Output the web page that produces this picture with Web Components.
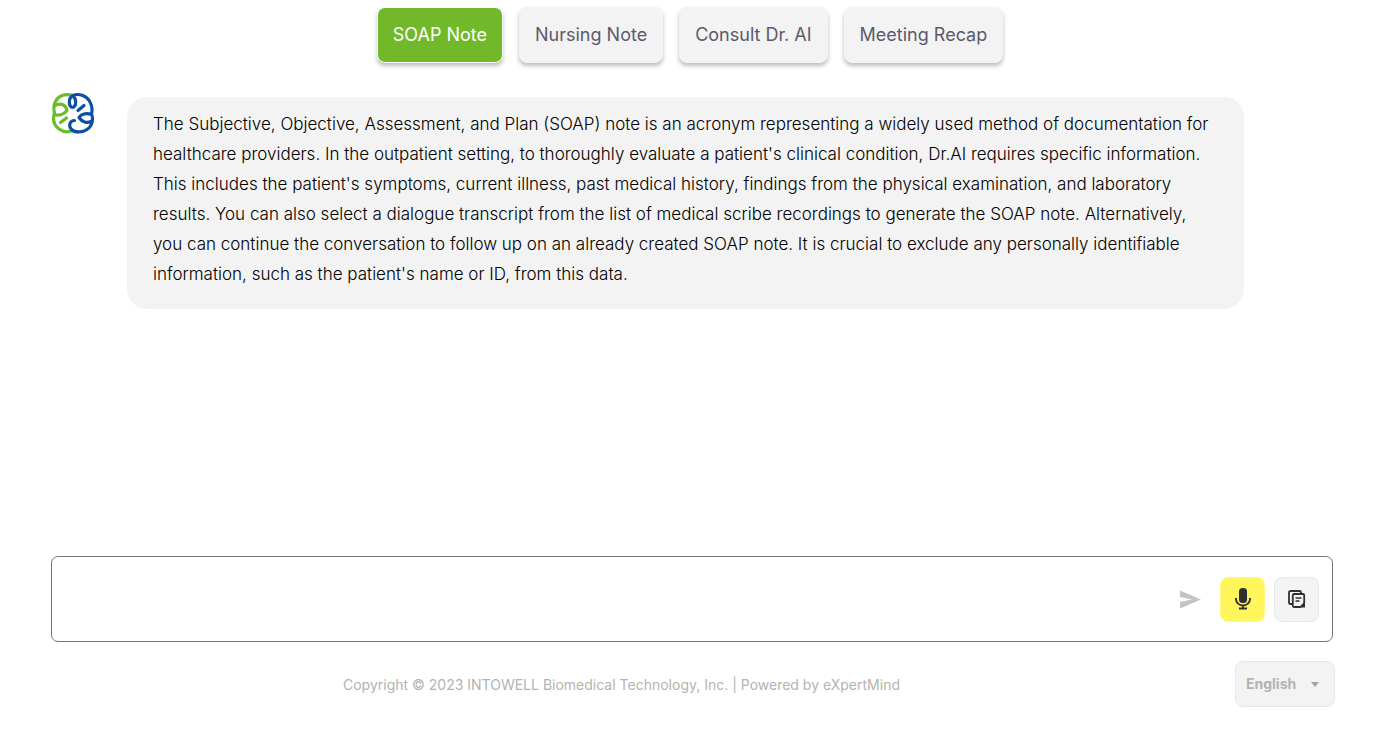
<!DOCTYPE html>
<html lang="en">
<head>
<meta charset="utf-8">
<meta name="viewport" content="width=device-width, initial-scale=1">
<title>Dr. AI</title>
<style>
body { margin: 0; background: #fff; font-family: Inter, sans-serif; }
</style>
</head>
<body>
<doctor-app></doctor-app>
<script>
const define = (name, html, setup) => {
  const template = document.createElement('template');
  template.innerHTML = html;
  customElements.define(name, class extends HTMLElement {
    constructor() {
      super();
      this.attachShadow({ mode: 'open' }).append(template.content.cloneNode(true));
    }
    connectedCallback() { if (setup) setup(this, this.shadowRoot); }
  });
};

define('mode-tab', `
<style>
:host { display: block; }
button { box-sizing: border-box; height: 56px; padding: 0 15px; border: 1px solid #f4f4f4; border-radius: 8px; background: #f3f3f3; color: #5d596c; font: 400 18px/24px Inter, sans-serif; white-space: nowrap; box-shadow: 0 3px 4px rgba(0,0,0,.26); cursor: pointer; }
:host([selected]) button { background: #71b92b; color: #fff; border-color: #fff; }
</style>
<button type="button"><slot></slot></button>`,
(host, root) => root.querySelector('button').setAttribute('aria-pressed', host.hasAttribute('selected')));

define('mode-tabs', `
<style>
:host { display: flex; justify-content: center; gap: 16px; padding: 7px 0 0; }
</style>
<slot></slot>`);

define('brand-logo', `
<style>
:host { display: block; width: 44px; height: 42px; }
svg { display: block; width: 100%; height: 100%; }
</style>
<svg viewBox="0 0 44 42" fill="none" stroke-width="3.200" stroke-linecap="round" stroke-linejoin="round" role="img" aria-label="Dr. AI">
  <g stroke="#69bd28">
    <path d="M21 3.500C14 1 7 4 4.500 9.500C2.500 13 2.500 17 3.500 21C1.500 27 3 33 8 37C12 40 16 40.500 20 39"/>
    <path d="M4 13.500C10 10.500 15 13 16 18.500M3.500 22.500C8 24 13 22.500 16 18.500"/>
    <path d="M9.500 30.500L15.500 26"/>
  </g>
  <g stroke="#0b50a2">
    <path d="M21.500 3.500C28 1 35 3.500 38.500 9C41.500 14 41.500 18 40.500 22C42.500 27 41.500 34 36 37.500C32 40.500 24 41 20.500 37.500C17 33.500 19 28.500 23.500 28.500"/>
    <ellipse cx="21.500" cy="10" rx="3.200" ry="5.500"/>
    <path d="M27 18.500L33 13.500M40.500 22.500C35 20.500 30 22 28 25.500C31 30 36 31.500 40 29.500"/>
  </g>
</svg>`);

define('chat-message', `
<style>
:host { display: grid; grid-template-columns: 44px minmax(0, 1fr); gap: 32px; align-items: start; padding: 34px 136px 0 51px; }
brand-logo { margin-top: -5px; }
p { margin: 0; padding: 12px 26px 20px; border-radius: 20px; background: #f3f3f3; color: #000; font-size: 17px; font-weight: 300; line-height: 30px; }
</style>
<brand-logo></brand-logo>
<p><slot></slot></p>`);

define('icon-button', `
<style>
:host { display: block; }
button { box-sizing: border-box; display: grid; place-items: center; width: 45px; height: 45px; padding: 0; border: 1px solid #e8e8e8; border-radius: 8px; background: #f3f3f3; color: #303030; cursor: pointer; }
:host([tone="yellow"]) button { background: #fff65c; border-color: #fff78a; }
:host([tone="plain"]) button { width: 24px; background: none; border: 0; color: #c4c4c4; }
</style>
<button type="button"><slot></slot></button>`,
(host, root) => root.querySelector('button').setAttribute('aria-label', host.getAttribute('label')));

define('message-composer', `
<style>
:host { display: flex; align-items: center; box-sizing: border-box; height: 86px; margin: 0 47px 0 51px; padding: 0 13px 0 16px; border: 1px solid #777; border-radius: 7px; background: #fff; }
textarea { flex: 1; min-width: 0; height: 60px; padding: 0; border: 0; outline: 0; resize: none; background: transparent; font: 300 17px/30px Inter, sans-serif; }
.actions { display: flex; gap: 9px; padding-left: 17px; }
svg { display: block; }
</style>
<textarea aria-label="Message"></textarea>
<icon-button tone="plain" label="Send"><svg width="24" height="24" viewBox="0 0 24 24" fill="currentColor"><path d="M1 3.500L22 12.500L1 21.500V15L13 12.500L1 10Z"/></svg></icon-button>
<div class="actions">
<icon-button tone="yellow" label="Record"><svg width="24" height="24" viewBox="0 0 24 24"><rect x="8" y="1" width="8" height="15" rx="3.500" fill="currentColor"/><path d="M5 11V12A7 6.500 0 0 0 19 12V11M12 18.500V21M8 21.500H16" fill="none" stroke="currentColor" stroke-width="1.900"/></svg></icon-button>
<icon-button label="Templates"><svg width="20" height="20" viewBox="0 0 20 20" fill="none" stroke="currentColor" stroke-width="1.800" stroke-linejoin="round"><path d="M5 15H3.500Q2 15 2 13.500V3.500Q2 2 3.500 2H12.500Q14 2 14 3.500V5"/><path d="M7 5H16Q17.200 5 17.200 6.200V14L13.500 18H7Q5.800 18 5.800 16.800V6.200Q5.800 5 7 5Z"/><path d="M8.500 9H14.500M8.500 12H12.500" stroke-width="1.500"/><path d="M12.500 18.500L18 13V18.500Z" fill="currentColor" stroke="none"/></svg></icon-button>
</div>`);

define('language-select', `
<style>
:host { display: grid; align-items: center; }
select, svg { grid-area: 1 / 1; }
select { appearance: none; box-sizing: border-box; width: 100px; height: 46px; padding: 0 10px; border: 1px solid #e7e7e7; border-radius: 8px; background: #f3f3f3; color: #b3b3b3; font: 700 14px/20px Inter, sans-serif; }
svg { justify-self: end; margin-right: 16px; pointer-events: none; }
</style>
<select aria-label="Language"><option>English</option></select>
<svg width="8" height="6" viewBox="0 0 8 6" fill="#a4a4a4"><path d="M0 1H8L4 6Z"/></svg>`);

define('page-footer', `
<style>
:host { display: flex; align-items: center; gap: 43px; padding: 19px 45px 43px 51px; }
p { flex: 1; margin: 0; padding-top: 2px; text-align: center; color: #b3b3b3; font-size: 14px; line-height: 20px; }
</style>
<p><slot></slot></p>
<language-select></language-select>`);

define('doctor-app', `
<style>
:host { display: flex; flex-direction: column; min-height: 100vh; }
main { flex: 1; }
</style>
<mode-tabs>
  <mode-tab selected>SOAP Note</mode-tab>
  <mode-tab>Nursing Note</mode-tab>
  <mode-tab>Consult Dr. AI</mode-tab>
  <mode-tab>Meeting Recap</mode-tab>
</mode-tabs>
<main>
  <chat-message>The Subjective, Objective, Assessment, and Plan (SOAP) note is an acronym representing a widely used method of documentation for healthcare providers. In the outpatient setting, to thoroughly evaluate a patient's clinical condition, Dr.AI requires specific information. This includes the patient's symptoms, current illness, past medical history, findings from the physical examination, and laboratory results. You can also select a dialogue transcript from the list of medical scribe recordings to generate the SOAP note. Alternatively, you can continue the conversation to follow up on an already created SOAP note. It is crucial to exclude any personally identifiable information, such as the patient's name or ID, from this data.</chat-message>
</main>
<message-composer></message-composer>
<page-footer>Copyright © 2023 INTOWELL Biomedical Technology, Inc. | Powered by eXpertMind</page-footer>`);
</script>
</body>
</html>
